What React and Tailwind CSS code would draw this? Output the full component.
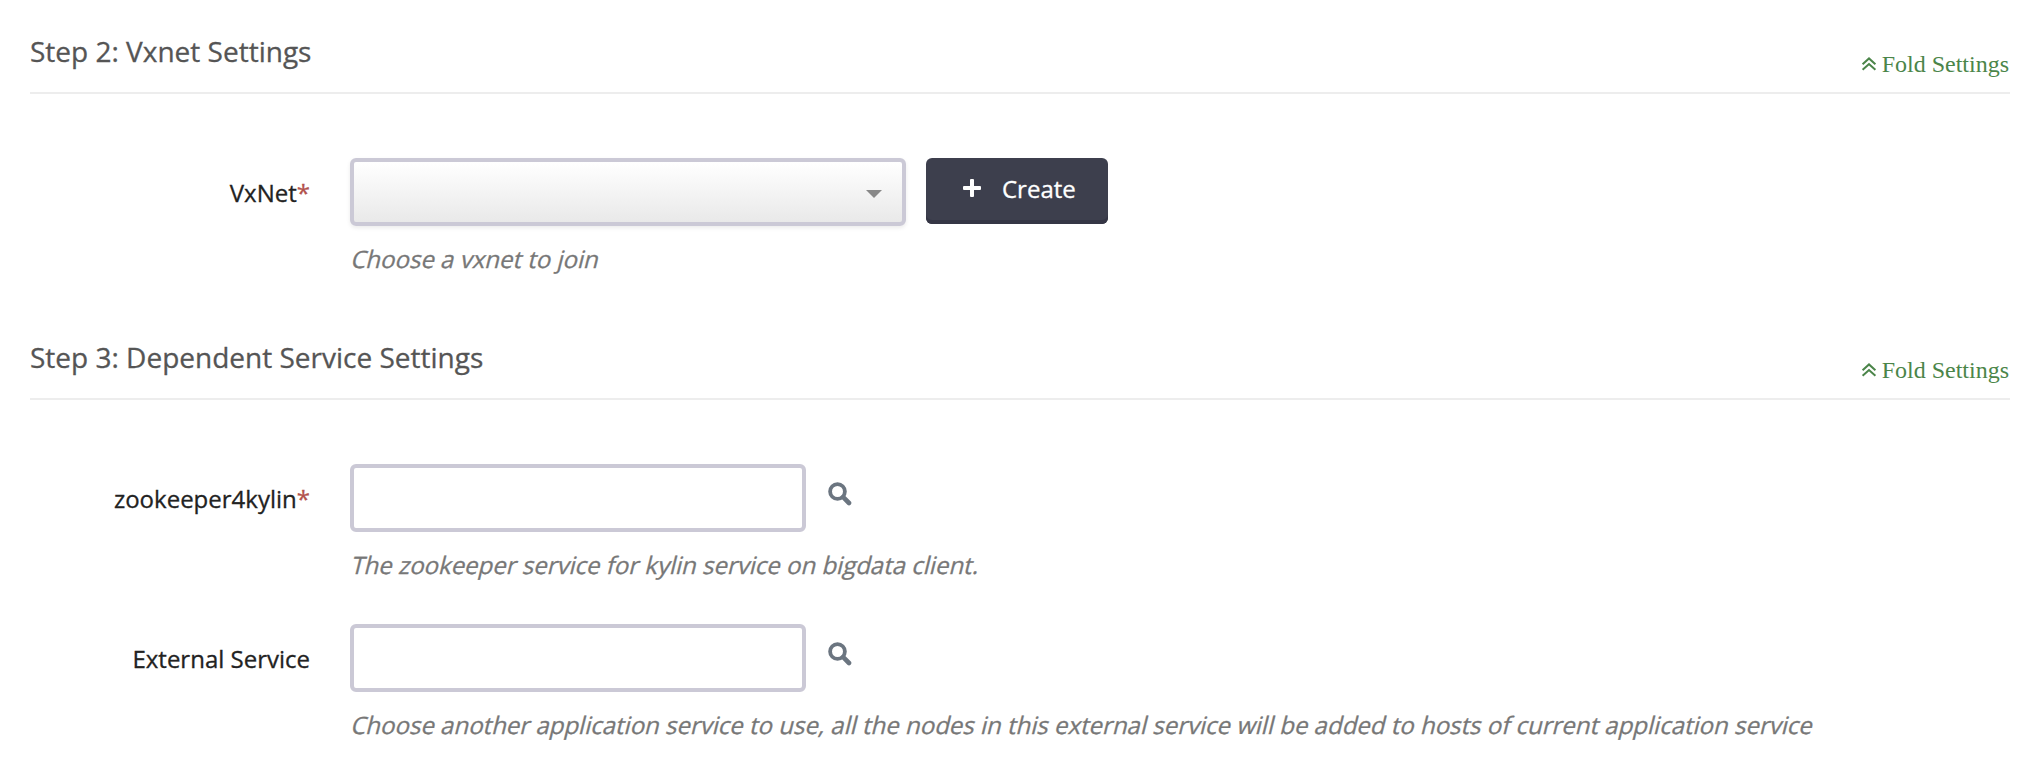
function FoldIcon() {
  return (
    <svg width="16" height="14" viewBox="0 0 16 14" fill="none" stroke="currentColor" strokeWidth="2">
      <path d="M1.6 7.2 8 1.4l6.4 5.8" />
      <path d="M1.6 12.8 8 7l6.4 5.8" />
    </svg>
  );
}

function SearchIcon() {
  return (
    <svg width="24" height="24" viewBox="0 0 24 24" fill="none" stroke="currentColor">
      <circle cx="9.5" cy="9.5" r="7.4" strokeWidth="3.8" />
      <path d="m15.2 15.2 5.8 5.8" strokeWidth="4.6" strokeLinecap="round" />
    </svg>
  );
}

function PlusIcon() {
  return (
    <svg width="18" height="18" viewBox="0 0 18 18" fill="currentColor">
      <rect x="7" y="0" width="4" height="18" rx="1" />
      <rect x="0" y="7" width="18" height="4" rx="1" />
    </svg>
  );
}

function Section({ title, children }) {
  return (
    <section>
      <header className="flex items-end justify-between border-b-2 border-[#ededed]">
        <h2 className="pb-[21px] text-[28px] leading-10 text-[#555555]">{title}</h2>
        <a className="mr-px mb-[14px] flex items-center gap-[5px] font-['Liberation_Serif',serif] text-2xl leading-7 text-[#4b8549] [-webkit-text-stroke:0px]">
          <FoldIcon />
          <span>Fold Settings</span>
        </a>
      </header>
      <div className="flex flex-col gap-11 pt-16">{children}</div>
    </section>
  );
}

function Field({ label, required, help, children }) {
  return (
    <div className="flex">
      <label className="mr-10 w-[280px] pt-[19px] text-right text-2xl leading-8 text-[#222222]">
        {label}
        {required && <span className="text-[#b2524d]">*</span>}
      </label>
      <div>
        <div className="flex h-[68px] items-start">{children}</div>
        <p className="mt-[17px] -mb-px origin-[0_25px] -skew-x-[14deg] whitespace-nowrap text-2xl leading-8 text-[#777777]">{help}</p>
      </div>
    </div>
  );
}

function SearchInput() {
  return (
    <>
      <input className="h-[68px] w-[456px] rounded-md border-4 border-[#cbc9d6] bg-white px-4 text-2xl outline-none" />
      <button className="mt-[18px] ml-[22px] text-[#6b7580]">
        <SearchIcon />
      </button>
    </>
  );
}

export default function App() {
  return (
    <main className="flex min-h-[776px] flex-col gap-[63px] bg-white pt-[31px] pr-8 pl-[30px] font-['Open_Sans',sans-serif] [-webkit-text-stroke:0.3px]">
      <Section title="Step 2: Vxnet Settings">
        <Field label="VxNet" required help="Choose a vxnet to join">
          <button className="flex h-[68px] w-[556px] items-center justify-end rounded-md border-4 border-[#cbc9d6] bg-linear-to-b from-white to-[#e9e9e9] pr-5 shadow-[0_2px_4px_rgba(0,0,0,0.08)]">
            <svg width="16" height="8" viewBox="0 0 16 8" className="mt-[3px] text-[#888888]" fill="currentColor">
              <path d="M0 0h16L8 8z" />
            </svg>
          </button>
          <button className="ml-5 flex h-[66px] w-[182px] items-start rounded-md bg-[#3d3f4d] pl-[37px] text-2xl leading-8 text-white shadow-[inset_0_-4px_0_#353645]">
            <span className="mt-[21px] mr-[21px]">
              <PlusIcon />
            </span>
            <span className="mt-[15px]">Create</span>
          </button>
        </Field>
      </Section>
      <Section title="Step 3: Dependent Service Settings">
        <Field label="zookeeper4kylin" required help="The zookeeper service for kylin service on bigdata client.">
          <SearchInput />
        </Field>
        <Field
          label="External Service"
          help="Choose another application service to use, all the nodes in this external service will be added to hosts of current application service"
        >
          <SearchInput />
        </Field>
      </Section>
    </main>
  );
}
